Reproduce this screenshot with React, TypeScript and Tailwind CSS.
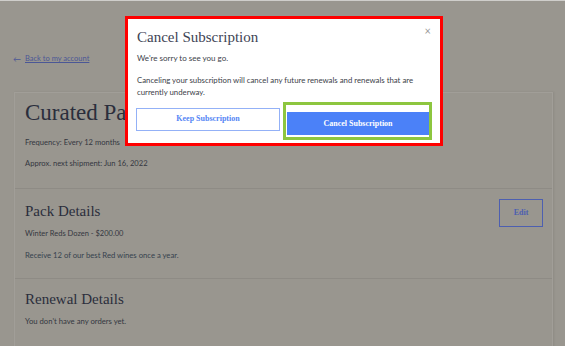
import React from "react";

const serif = "font-['Liberation_Serif',serif]";
const sans = "font-['Lato',sans-serif]";

const App = () => {
  return (
    <div className={`relative w-[565px] h-[346px] overflow-hidden bg-[#99968f] border-t border-[#cfcecb] ${sans}`}>
      {/* Back link */}
      <div className="flex items-center gap-[4px] pl-[13px] pt-[52px] pb-[27px] text-[7.5px] text-[#4b5796]">
        <span className="text-[8px] leading-[12px]">&larr;</span>
        <span className="underline leading-[12px]">Back to my account</span>
      </div>

      {/* Card */}
      <div className="ml-[14px] w-[539px] border border-[#a19e98] shadow-[1px_0_2px_rgba(0,0,0,0.08)]">
        {/* Header */}
        <div className="px-[10px] pt-[6px] pb-[19px] border-b border-[#8e8b85]">
          <h1 className={`${serif} text-[23px] leading-[28px] text-[#2b2e3c]`}>Curated Pack</h1>
          <p className="mt-[9px] text-[7.6px] leading-[12px] text-[#34363f]">Frequency: Every 12 months</p>
          <p className="mt-[9px] text-[7.6px] leading-[12px] text-[#34363f]">Approx. next shipment: Jun 16, 2022</p>
        </div>

        {/* Pack Details */}
        <div className="flex items-start justify-between pl-[10px] pr-[9px] pt-[10px] pb-[17px] border-b border-[#8e8b85]">
          <div>
            <h2 className={`${serif} mt-[2px] text-[15px] leading-[20px] text-[#2b2e3c]`}>Pack Details</h2>
            <p className="mt-[7px] text-[7.5px] leading-[12px] text-[#34363f]">Winter Reds Dozen - $200.00</p>
            <p className="mt-[9px] text-[7.7px] leading-[12px] text-[#36424e]">Receive 12 of our best Red wines once a year.</p>
          </div>
          <button className={`${serif} w-[44px] h-[28px] border border-[#4d5fb0] text-[8px] font-bold text-[#4d5fb0]`}>
            Edit
          </button>
        </div>

        {/* Renewal Details */}
        <div className="px-[10px] pt-[10px] pb-[20px]">
          <h2 className={`${serif} text-[15px] leading-[20px] text-[#2b2e3c]`}>Renewal Details</h2>
          <p className="mt-[6px] text-[7.7px] leading-[12px] text-[#34363f]">You don't have any orders yet.</p>
        </div>
      </div>

      {/* Modal */}
      <div className="absolute left-[125px] top-[15px] w-[318px] bg-white border-[3px] border-[#ff0000] pl-[8px] pr-[11px] pt-[8px] pb-[8px]">
        <span className="absolute right-[9px] top-[6px] text-[11px] leading-none text-[#9a9a9a]">&times;</span>
        <h3 className={`${serif} pl-[1px] text-[15px] leading-[20px] text-[#3e4455]`}>Cancel Subscription</h3>
        <p className="mt-[5px] pl-[1px] text-[8px] leading-[12.5px] text-[#3b3e48]">We're sorry to see you go.</p>
        <p className="mt-[9px] pl-[1px] text-[7.8px] leading-[12.5px] text-[#3b3e48]">
          Canceling your subscription will cancel any future renewals and renewals that are
          <br />
          currently underway.
        </p>
        <div className="mt-[9px] flex gap-[7px]">
          <button className={`${serif} w-[144px] h-[23px] border border-[#93b1f7] text-[8px] font-bold text-[#5586f5]`}>
            Keep Subscription
          </button>
          <div className="relative flex-1">
            <button className={`${serif} w-full h-[23px] bg-[#4b81f8] text-[8px] font-bold text-white`}>
              Cancel Subscription
            </button>
            <span className="pointer-events-none absolute left-[-4px] right-[-3px] top-[-6px] bottom-[-5px] border-[3px] border-[#8dc63f]" />
          </div>
        </div>
      </div>
    </div>
  );
};

export default App;
